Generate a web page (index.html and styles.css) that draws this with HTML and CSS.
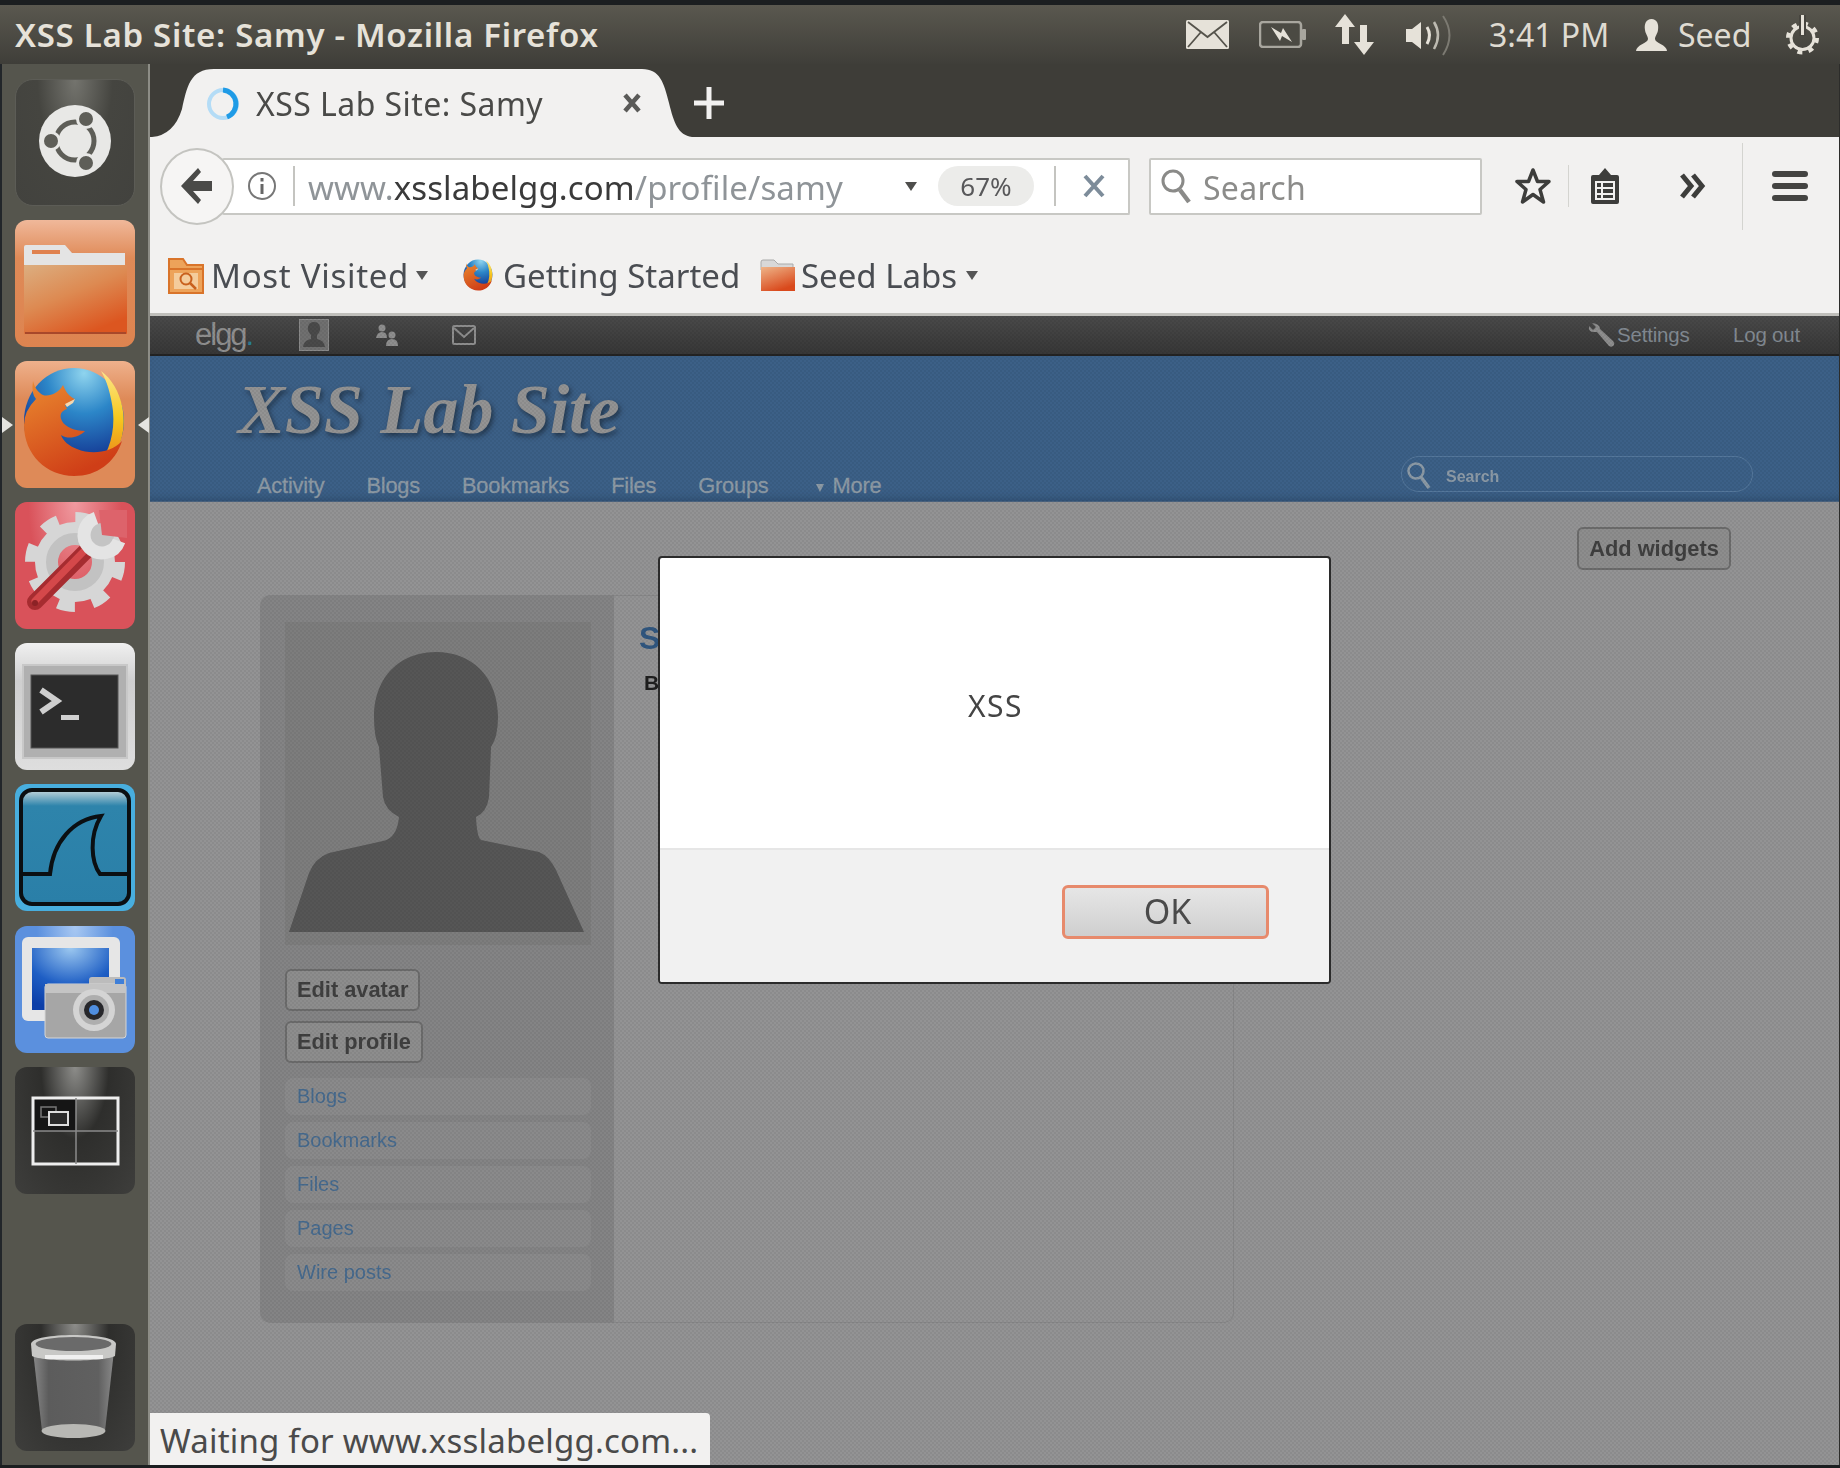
FILE: index.html
```html
<!DOCTYPE html>
<html lang="en">
<head>
  <meta charset="UTF-8">
  <title>XSS Lab Site: Samy - Mozilla Firefox</title>
  <link rel="stylesheet" href="styles.css">
</head>
<body>

  <svg class="defs" width="0" height="0">
    <defs>
      <radialGradient id="ffBlue" cx="0.6" cy="0.05" r="0.95">
        <stop offset="0" stop-color="#8fd4ee"/>
        <stop offset="0.4" stop-color="#2c86c8"/>
        <stop offset="0.8" stop-color="#17429a"/>
        <stop offset="1" stop-color="#14307c"/>
      </radialGradient>
      <linearGradient id="ffOrange" x1="0" y1="0" x2="0.5" y2="1">
        <stop offset="0" stop-color="#ea8a30"/>
        <stop offset="1" stop-color="#cf3e17"/>
      </linearGradient>
      <linearGradient id="ffFlame" x1="0" y1="0" x2="0" y2="1">
        <stop offset="0" stop-color="#fbe58a"/>
        <stop offset="0.5" stop-color="#f7c81e"/>
        <stop offset="1" stop-color="#e8801c"/>
      </linearGradient>
      <symbol id="firefox" viewBox="0 0 118 122">
        <ellipse cx="59" cy="60" rx="50" ry="53" fill="url(#ffBlue)"/>
        <path d="M86 10C108 26 114 62 104 84C100 94 92 100 84 104C94 90 100 72 98 50C96 34 92 20 86 10Z" fill="url(#ffFlame)"/>
        <path d="M18 20Q16 32 21 38Q9 50 9 64C9 94 32 115 59 115C82 115 100 102 107 80C96 92 76 94 62 88C54 85 48 80 46 74C54 79 64 76 70 70C60 70 50 66 47 60C44 54 46 50 52 48L50 44L60 38C55 36 51 32 48 24C44 32 34 36 28 34C24 32 20 28 18 20Z" fill="url(#ffOrange)"/>
        <path d="M50 43L60 38L58 42L52 46Z" fill="#f6d8b0"/>
      </symbol>
    </defs>
  </svg>

  <div class="screen">

    <header class="panel">
      <div class="panel-title">XSS Lab Site: Samy - Mozilla Firefox</div>
      <div class="tray">
        <svg class="tray-mail" width="43" height="29" viewBox="0 0 43 29"><rect x="0" y="0" width="43" height="29" rx="1.5" fill="#e6e2d9"/><path d="M2 2L21.5 17L41 2M2 27L15 12M41 27L28 12" fill="none" stroke="#55534b" stroke-width="1.8"/></svg>
        <svg class="tray-battery" width="48" height="27" viewBox="0 0 48 27"><rect x="1" y="1" width="41" height="25" rx="3" fill="#4b4a43" stroke="#a8a69e" stroke-width="2.500"/><rect x="43" y="8" width="4" height="11" rx="1" fill="#a8a69e"/><path d="M12 6L22 12L24 7L33 21L23 15L21 20Z" fill="#e6e2d9"/></svg>
        <svg class="tray-net" width="41" height="41" viewBox="0 0 41 41"><path d="M11 0L21 13H15V30H8V13H1Z" fill="#e6e2d9"/><path d="M30 41L20 28H26V11H33V28H40Z" fill="#e6e2d9"/></svg>
        <svg class="tray-sound" width="46" height="42" viewBox="0 0 46 42"><path d="M0 15H6L15 8V35L6 28H0Z" fill="#e6e2d9"/><path d="M21 13Q26 21 21 30" fill="none" stroke="#e6e2d9" stroke-width="3"/><path d="M28 8Q36 21 28 35" fill="none" stroke="#bdbab1" stroke-width="2.5"/><path d="M37 2Q50 21 37 41" fill="none" stroke="#7c7a72" stroke-width="2"/></svg>
        <span class="tray-time">3:41 PM</span>
        <svg class="tray-user" width="31" height="32" viewBox="0 0 31 32"><path d="M15.5 0C21 0 23 5 22 11C21.500 15 19 17 19 20C19 24 31 26 31 32H0C0 26 12 24 12 20C12 17 9.500 15 9 11C8 5 10 0 15.5 0Z" fill="#e6e2d9"/></svg>
        <span class="tray-name">Seed</span>
        <svg class="tray-power" width="37" height="40" viewBox="0 0 37 40"><circle cx="18.500" cy="23" r="11.500" fill="none" stroke="#e6e2d9" stroke-width="3"/><circle cx="18.500" cy="23" r="14.500" fill="none" stroke="#e6e2d9" stroke-width="4" stroke-dasharray="5 6.390"/><rect x="15" y="0" width="7" height="21" fill="#47453f"/><rect x="17" y="0" width="3" height="20" fill="#e6e2d9"/></svg>
      </div>
    </header>

    <div class="desktop">

      <nav class="dock">
        <div class="launcher launcher-dash">
          <svg viewBox="0 0 120 127" width="120" height="127">
            <circle cx="60" cy="62" r="36" fill="#e8e8e6"/>
            <circle cx="60" cy="62" r="19" fill="none" stroke="#5e5e58" stroke-width="5"/>
            <circle cx="71" cy="40" r="8.500" fill="#5e5e58" stroke="#e8e8e6" stroke-width="3"/>
            <circle cx="71" cy="84" r="8.500" fill="#5e5e58" stroke="#e8e8e6" stroke-width="3"/>
            <circle cx="36" cy="62" r="8.500" fill="#5e5e58" stroke="#e8e8e6" stroke-width="3"/>
          </svg>
        </div>
        <div class="launcher launcher-files">
          <svg viewBox="0 0 120 127" width="120" height="127">
            <defs><linearGradient id="folderBody" x1="0" y1="0" x2="0.6" y2="1"><stop offset="0" stop-color="#dcae80"/><stop offset="0.5" stop-color="#dd8a52"/><stop offset="1" stop-color="#dc5620"/></linearGradient></defs>
            <path d="M9 27Q9 25 11 25H50L57 33H110V45H9Z" fill="#e4e4e4"/>
            <rect x="17" y="30" width="28" height="4" fill="#e0824f"/>
            <rect x="9" y="45" width="103" height="69" rx="1" fill="url(#folderBody)"/>
            <rect x="10" y="112" width="101" height="2" fill="#a8482a"/>
          </svg>
        </div>
        <div class="launcher launcher-firefox">
          <svg width="120" height="127"><use href="#firefox" width="118" height="122"/></svg>
        </div>
        <div class="launcher launcher-tools">
          <svg viewBox="0 0 120 127" width="120" height="127">
            <circle cx="60" cy="60" r="44" fill="none" stroke="#d6d6d6" stroke-width="12" stroke-dasharray="17 17.560"/>
            <circle cx="60" cy="60" r="33" fill="none" stroke="#d6d6d6" stroke-width="14"/>
            <circle cx="60" cy="60" r="23" fill="none" stroke="#c2c2c2" stroke-width="12"/>
            <path d="M20 100L74 46" stroke="#a62c30" stroke-width="16" stroke-linecap="round"/>
            <path d="M20 99L72 46" stroke="#d4484a" stroke-width="7" stroke-linecap="round"/>
            <circle cx="20" cy="101" r="3" fill="#8c2226"/>
            <circle cx="87" cy="33" r="12" fill="#c4c4c4"/>
            <path d="M87 33L84 8L112 8L112 36Z" fill="#dd636b"/>
            <path d="M81 16A18 18 0 1 0 104 39" fill="none" stroke="#e4e4e4" stroke-width="13"/>
          </svg>
        </div>
        <div class="launcher launcher-terminal">
          <svg viewBox="0 0 120 127" width="120" height="127">
            <rect x="8" y="22" width="104" height="93" fill="#b0b0b0" stroke="#c8c8c8" stroke-width="2"/>
            <rect x="16" y="32" width="87" height="73" fill="#2c2c2c" stroke="#555" stroke-width="1"/>
            <path d="M26 47L42 58L26 69" fill="none" stroke="#cfcfcf" stroke-width="6"/>
            <rect x="46" y="72" width="18" height="5" fill="#d0d0d0"/>
          </svg>
        </div>
        <div class="launcher launcher-shark">
          <svg viewBox="0 0 120 127" width="120" height="127">
            <defs><linearGradient id="sharkGlow" x1="0" y1="0" x2="0" y2="1"><stop offset="0" stop-color="#c4d6dc"/><stop offset="0.14" stop-color="#2e84ab"/><stop offset="1" stop-color="#2a7fa8"/></linearGradient></defs>
            <rect x="6" y="6" width="108" height="114" rx="11" fill="url(#sharkGlow)" stroke="#0b0f12" stroke-width="4"/>
            <path d="M6 90H35C38 58 58 35 86 32C74 52 76 78 85 90H114" fill="none" stroke="#0b0f12" stroke-width="4"/>
          </svg>
        </div>
        <div class="launcher launcher-shot">
          <svg viewBox="0 0 120 127" width="120" height="127">
            <defs><radialGradient id="shotScreen" cx="0.5" cy="0" r="1"><stop offset="0" stop-color="#9cc8f0"/><stop offset="0.6" stop-color="#1e5ec4"/><stop offset="1" stop-color="#0c3ea8"/></radialGradient></defs>
            <rect x="7" y="11" width="98" height="84" rx="6" fill="#e6e6e6"/>
            <rect x="17" y="22" width="77" height="62" fill="url(#shotScreen)"/>
            <rect x="74" y="51" width="37" height="10" rx="3" fill="#bcbcbc"/>
            <rect x="30" y="58" width="81" height="54" rx="3" fill="#a6a6a6" stroke="#d6d6d6" stroke-width="1"/>
            <rect x="30" y="58" width="81" height="9" fill="#c4c4c4"/>
            <rect x="100" y="53" width="9" height="5" fill="#3f7fd8"/>
            <circle cx="79" cy="84" r="21" fill="#d4d4d4"/>
            <circle cx="79" cy="84" r="15" fill="#aeaeae"/>
            <circle cx="79" cy="84" r="10" fill="#27272b"/>
            <circle cx="79" cy="84" r="5" fill="#4f8ee0"/>
          </svg>
        </div>
        <div class="launcher launcher-workspace">
          <svg viewBox="0 0 120 127" width="120" height="127">
            <rect x="18" y="31" width="43" height="33" fill="#151515"/>
            <rect x="18" y="31" width="85" height="66" fill="none" stroke="#eee" stroke-width="3"/>
            <path d="M61 31V97M18 64H103" stroke="#8a8a8a" stroke-width="1.500"/>
            <rect x="26" y="40" width="15" height="10" fill="none" stroke="#777" stroke-width="1.500"/>
            <rect x="34" y="45" width="19" height="13" fill="#2a2a2a" stroke="#ddd" stroke-width="2"/>
          </svg>
        </div>
        <div class="launcher launcher-trash">
          <svg viewBox="0 0 120 127" width="120" height="127">
            <defs><linearGradient id="cupGlass" x1="0" y1="0" x2="1" y2="0"><stop offset="0" stop-color="#8a8a8a"/><stop offset="0.2" stop-color="#5c5c5c"/><stop offset="0.8" stop-color="#606060"/><stop offset="1" stop-color="#8c8c8c"/></linearGradient></defs>
            <path d="M17 18L27 107H90L100 18Z" fill="url(#cupGlass)"/>
            <ellipse cx="58.500" cy="107" rx="32" ry="7" fill="#b8b8b4"/>
            <path d="M16 20C16 8 101 8 101 20L100 32C90 38 27 38 17 32Z" fill="#c8c8c6"/>
            <ellipse cx="58.500" cy="20" rx="38" ry="7" fill="#6a6a6a"/>
            <path d="M30 33H88" stroke="#f0f0f0" stroke-width="4"/>
          </svg>
        </div>
      </nav>

      <div class="browser">

        <div class="tabbar">
          <div class="tab">
            <svg class="tab-shape" width="540" height="68" viewBox="0 0 540 68"><path d="M0 68Q22 66 30 40C35 18 38 0 62 0H490C508 0 512 14 517 34C522 54 526 66 540 68Z" fill="#f2f1f0"/></svg>
            <svg class="tab-spinner" width="36" height="38" viewBox="0 0 36 38"><circle cx="18" cy="19" r="14" fill="none" stroke="#b4dcf6" stroke-width="4"/><path d="M18 5A14 14 0 0 1 22 32" fill="none" stroke="#1f9be6" stroke-width="5"/></svg>
            <span class="tab-label">XSS Lab Site: Samy</span>
            <svg class="tab-close" width="18" height="20" viewBox="0 0 18 20"><path d="M2 2L16 18M16 2L2 18" stroke="#5a5a58" stroke-width="4.500"/></svg>
          </div>
          <svg class="tab-new" width="30" height="32" viewBox="0 0 30 32"><path d="M15 0V32M0 16H30" stroke="#f2f1f0" stroke-width="5"/></svg>
        </div>

        <div class="navbar">
          <div class="back-btn">
            <svg width="34" height="38" viewBox="0 0 34 38"><path d="M19 1L2 19L19 37L22 33L14 24H33V14H14L22 5Z" fill="#4a4a48"/></svg>
          </div>
          <div class="urlbar">
            <svg class="url-info" width="30" height="30" viewBox="0 0 30 30"><circle cx="15" cy="15" r="13" fill="none" stroke="#777" stroke-width="2"/><rect x="13.500" y="13" width="3" height="10" fill="#666"/><rect x="13.500" y="7" width="3" height="3.500" fill="#666"/></svg>
            <span class="url-sep"></span>
            <span class="url-text">www.<b>xsslabelgg.com</b>/profile/samy</span>
            <span class="url-arrow"></span>
            <span class="url-zoom">67%</span>
            <span class="url-sep url-sep-right"></span>
            <svg class="url-stop" width="22" height="24" viewBox="0 0 22 24"><path d="M2 2L20 22M20 2L2 22" stroke="#7d8c9a" stroke-width="4"/></svg>
          </div>
          <div class="searchbar">
            <svg width="32" height="36" viewBox="0 0 32 36"><circle cx="13" cy="13" r="10" fill="none" stroke="#8a8a88" stroke-width="3"/><path d="M20 22L29 34" stroke="#8a8a88" stroke-width="4.500"/></svg>
            <span>Search</span>
          </div>
          <svg class="nav-star" width="36" height="38" viewBox="0 0 36 38"><path d="M18 3L22.500 14.500H34L25 22.500L28.500 35L18 27.500L7.500 35L11 22.500L2 14.500H13.500Z" fill="none" stroke="#3d3d3b" stroke-width="3.500" stroke-linejoin="round"/></svg>
          <span class="nav-sep nav-sep-short"></span>
          <svg class="nav-clip" width="28" height="36" viewBox="0 0 28 36"><path d="M14 0L20 7H26Q28 7 28 9V34Q28 36 26 36H2Q0 36 0 34V9Q0 7 2 7H8Z" fill="#3d3d3b"/><path d="M5 14H23V31H5ZM5 20H23M5 26H23M11 14V31" fill="none" stroke="#f2f1f0" stroke-width="2"/></svg>
          <svg class="nav-more" width="28" height="28" viewBox="0 0 28 28"><path d="M3 3L12 14L3 25M14 3L23 14L14 25" fill="none" stroke="#3d3d3b" stroke-width="5"/></svg>
          <span class="nav-sep nav-sep-tall"></span>
          <div class="hamburger"><i></i><i></i><i></i></div>
        </div>

        <div class="bookmarks">
          <div class="bm bm-visited">
            <svg width="36" height="38" viewBox="0 0 36 38"><path d="M1 37V3H15L19 9H35V37Z" fill="#eda35a" stroke="#d9742a" stroke-width="2"/><path d="M1 13H35" stroke="#d9742a" stroke-width="2"/><rect x="6" y="17" width="24" height="16" fill="#f4cc9c"/><circle cx="18" cy="23" r="5.500" fill="none" stroke="#c9611e" stroke-width="2"/><path d="M22 27L28 33" stroke="#c9611e" stroke-width="2.500"/></svg>
            <span>Most Visited</span>
            <i class="caret"></i>
          </div>
          <div class="bm bm-started">
            <svg width="34" height="36"><use href="#firefox" width="34" height="36"/></svg>
            <span>Getting Started</span>
          </div>
          <div class="bm bm-labs">
            <svg width="36" height="34" viewBox="0 0 36 34"><defs><linearGradient id="bmFolder" x1="0" y1="0" x2="0.5" y2="1"><stop offset="0" stop-color="#eeb488"/><stop offset="1" stop-color="#d9491c"/></linearGradient></defs><path d="M1 4Q1 2 3 2H14L18 6H33V12H1Z" fill="#d8d8d8" stroke="#aaa" stroke-width="1"/><rect x="1" y="9" width="34" height="24" fill="url(#bmFolder)"/></svg>
            <span>Seed Labs</span>
            <i class="caret"></i>
          </div>
        </div>

        <main class="webpage">
          <div class="elgg-topbar">
            <span class="elgg-logo">elgg<em>.</em></span>
            <svg class="top-avatar" width="30" height="32" viewBox="0 0 30 32"><rect width="30" height="32" fill="#707070" stroke="#8a8a8a" stroke-width="2"/><path d="M4 28Q5 21 12 20V16Q8 12 9 8Q10 3 15 3Q20 3 21 8Q22 12 18 16V20Q25 21 26 28Z" fill="#4a4a4a"/></svg>
            <svg class="top-friends" width="24" height="22" viewBox="0 0 24 22"><circle cx="7" cy="4" r="3.500" fill="#8e8e8e"/><path d="M1 14Q2 8 7 8Q12 8 12 14Z" fill="#8e8e8e"/><circle cx="17" cy="11" r="3.500" fill="#8e8e8e"/><path d="M11 22Q11 15 17 15Q23 15 23 22Z" fill="#8e8e8e"/></svg>
            <svg class="top-mail" width="24" height="20" viewBox="0 0 24 20"><rect x="1" y="1" width="22" height="18" rx="1.500" fill="none" stroke="#8e8e8e" stroke-width="2"/><path d="M2 3L12 12L22 3" fill="none" stroke="#8e8e8e" stroke-width="2"/></svg>
            <svg class="top-wrench" width="27" height="26" viewBox="0 0 27 26"><path d="M4 1L8 5L5 8L1 4Q0 10 6 10L9 10L21 24Q24 26 26 23Q27 21 25 19L12 7Q12 2 4 1Z" fill="#8e8e8e"/></svg>
            <a class="top-link top-settings">Settings</a>
            <a class="top-link top-logout">Log out</a>
          </div>

          <div class="elgg-header">
            <h1 class="site-title">XSS Lab Site</h1>
            <div class="site-bottom">
              <ul class="site-menu">
                <li>Activity</li>
                <li>Blogs</li>
                <li>Bookmarks</li>
                <li>Files</li>
                <li>Groups</li>
                <li class="menu-more"><i></i>More</li>
              </ul>
              <div class="site-search">
                <svg width="26" height="30" viewBox="0 0 26 30"><circle cx="10" cy="10" r="7.500" fill="none" stroke="#8c9aa6" stroke-width="2.500"/><path d="M15 16L23 27" stroke="#8c9aa6" stroke-width="3.500"/></svg>
                <span>Search</span>
              </div>
            </div>
          </div>

          <div class="elgg-content">
            <div class="widget-bar"><button class="elgg-btn btn-widgets">Add widgets</button></div>
            <div class="profile-card">
              <aside class="owner-block">
                <div class="avatar">
                  <svg width="306" height="323" viewBox="0 0 306 323"><path d="M4 310L24 251Q30 236 44 231L98 219Q112 216 114 195Q100 188 98 175L94 125Q89 115 89 95C89 55 115 30 151 30C187 30 213 55 213 95Q213 115 206 125L204 175Q202 190 191 195Q192 216 196 218L254 230Q264 234 271 248L299 310Z" fill="#565656"/></svg>
                </div>
                <div class="owner-actions">
                  <button class="elgg-btn">Edit avatar</button>
                  <button class="elgg-btn">Edit profile</button>
                </div>
                <ul class="owner-menu">
                  <li>Blogs</li>
                  <li>Bookmarks</li>
                  <li>Files</li>
                  <li>Pages</li>
                  <li>Wire posts</li>
                </ul>
              </aside>
              <section class="profile-details">
                <h2 class="profile-name">S</h2>
                <div class="profile-field">B</div>
              </section>
            </div>
          </div>

          <div class="dither"></div>

          <div class="alert-dialog">
            <div class="alert-body">XSS</div>
            <div class="alert-footer"><button class="alert-ok">OK</button></div>
          </div>

          <div class="statusbar">Waiting for www.xsslabelgg.com...</div>
        </main>

      </div>
    </div>
  </div>

</body>
</html>
```

FILE: styles.css
```css
* {
  box-sizing: border-box;
}

html, body {
  margin: 0;
  height: 100%;
}

body {
  background: #1b1e20;
  font-family: 'Noto Sans', sans-serif;
  overflow: hidden;
}

.defs {
  position: absolute;
}

.screen {
  height: 1468px;
  padding: 5px 0 3px;
  display: flex;
  flex-direction: column;
  filter: blur(0.6px);
}

/* top panel */

.panel {
  height: 59px;
  flex: none;
  display: flex;
  align-items: center;
  justify-content: space-between;
  padding-left: 15px;
  background: linear-gradient(to bottom, #5a584f, #3f3e39);
  color: #e6e2d9;
}

.panel-title {
  font-size: 33px;
  font-weight: 600;
  letter-spacing: 0.7px;
  white-space: nowrap;
}

.tray {
  display: flex;
  align-items: center;
  padding-right: 19px;
}

.tray-battery { margin-left: 30px; }
.tray-net { margin-left: 27px; }
.tray-sound { margin-left: 31px; }
.tray-user { margin-left: 28px; }
.tray-power { margin-left: 32px; }

.tray-time, .tray-name {
  font-size: 32px;
  color: #dfdbd2;
}

.tray-time {
  margin-left: 37px;
  width: 119px;
  white-space: nowrap;
}

.tray-name {
  margin-left: 11px;
  width: 74px;
}

.desktop {
  flex: 1;
  min-height: 0;
  display: flex;
}

/* launcher */

.dock {
  width: 150px;
  flex: none;
  display: flex;
  flex-direction: column;
  gap: 14.1px;
  padding: 15px 0 14px 13px;
  background: #55554d;
  border-left: 2px solid #22262a;
  border-right: 2px solid #8d8d86;
}

.launcher {
  width: 120px;
  height: 127px;
  flex: none;
  border-radius: 12px;
  position: relative;
}

.launcher svg {
  display: block;
}

.launcher-dash {
  background: radial-gradient(ellipse at 50% 0, #74746e, #454540 45%, #42423e);
  border: 1px solid #5c5c56;
  border-radius: 18px;
}

.launcher-dash svg { margin: -1px; }

.launcher-files {
  background: linear-gradient(to bottom, #f0b89a, #df8a57 30%, #dd8450);
}

.launcher-firefox {
  background: linear-gradient(to bottom, #efb18c, #de8a58 30%);
}

.launcher-firefox::before, .launcher-firefox::after {
  content: "";
  position: absolute;
  top: 50%;
  margin-top: -8px;
  border: 8px solid transparent;
}

.launcher-firefox::before {
  left: -13px;
  border-width: 8px 0 8px 11px;
  border-left-color: #e4e4e0;
}

.launcher-firefox::after {
  right: -14px;
  border-width: 8px 11px 8px 0;
  border-right-color: #e4e4e0;
}

.launcher-tools {
  background: radial-gradient(ellipse at 50% 0, #f09aa0, #d9525a 55%);
}

.launcher-terminal {
  background: linear-gradient(to bottom, #f0f0f0, #cfcfcf 30%, #dedede);
}

.launcher-shark {
  background: #48aede;
}

.launcher-shot {
  background: radial-gradient(ellipse at 50% 0, #a8c8f2, #5b90de 45%);
}

.launcher-workspace, .launcher-trash {
  background: radial-gradient(ellipse at 50% 0, #8d8d8a, #2e2e2c 40%, #3e3e3c);
}

.launcher-trash {
  margin-top: auto;
}

/* browser chrome */

.browser {
  flex: 1;
  min-width: 0;
  display: flex;
  flex-direction: column;
  border-right: 1px solid #2c2c2a;
}

.tabbar {
  height: 73px;
  flex: none;
  display: flex;
  align-items: flex-end;
  background: #3e3d38;
  padding-left: 2px;
}

.tab {
  position: relative;
  width: 540px;
  height: 68px;
  flex: none;
  display: flex;
  align-items: center;
  color: #4a4a48;
}

.tab-shape {
  position: absolute;
  left: 0;
  top: 0;
}

.tab-spinner, .tab-label, .tab-close {
  position: relative;
  flex: none;
}

.tab-spinner { margin-left: 53px; margin-top: 2px; }

.tab-label {
  margin-left: 15px;
  font-size: 32px;
  width: 288px;
  letter-spacing: 0.45px;
  white-space: nowrap;
}

.tab-close { margin-left: 79px; }

.tab-new {
  margin: 0 0 18px 2px;
}

.navbar {
  height: 98px;
  flex: none;
  display: flex;
  align-items: center;
  padding-left: 10px;
  background: #f2f1f0;
}

.back-btn {
  width: 74px;
  height: 77px;
  flex: none;
  border: 2px solid #c4c4c0;
  border-radius: 50%;
  background: #f6f5f4;
  display: flex;
  align-items: center;
  justify-content: center;
  margin-right: -12px;
  position: relative;
  z-index: 1;
  padding-right: 2px;
}

.urlbar, .searchbar {
  height: 57px;
  display: flex;
  align-items: center;
  background: #fff;
  border: 2px solid #c8c8c4;
  border-radius: 2px;
}

.urlbar {
  width: 908px;
  padding-left: 25px;
  border-left: none;
  flex: none;
}

.url-sep {
  width: 2px;
  height: 40px;
  background: #c4c4c0;
  margin-left: 16px;
}

.url-text {
  margin: 2px 0 0 13px;
  width: 534px;
  font-size: 33px;
  color: #8f9498;
  white-space: nowrap;
  letter-spacing: 0.1px;
}

.url-text b {
  font-weight: 400;
  color: #3a3a3a;
}

.url-arrow {
  margin-left: 63px;
  border-style: solid;
  border-width: 9px 6px 0;
  border-color: #4e4e4c transparent transparent;
}

.url-zoom {
  width: 96px;
  height: 40px;
  margin-left: 21px;
  border-radius: 20px;
  background: #ececea;
  color: #58585a;
  font-size: 26px;
  line-height: 40px;
  text-align: center;
}

.url-sep-right {
  margin-left: 20px;
}

.url-stop {
  margin-left: 27px;
}

.searchbar {
  width: 333px;
  margin-left: 19px;
  padding-left: 9px;
  flex: none;
  color: #8c8c8a;
  font-size: 32px;
}

.searchbar span {
  margin: 2px 0 0 11px;
  letter-spacing: 0.3px;
}

.nav-star { margin-left: 33px; flex: none; }

.nav-sep {
  width: 1px;
  background: #d4d4d0;
  flex: none;
}

.nav-sep-short { height: 42px; margin-left: 17px; }
.nav-sep-tall { height: 87px; margin-left: 35px; }
.nav-clip { margin-left: 22px; flex: none; }
.nav-more { margin-left: 60px; flex: none; }

.hamburger {
  width: 36px;
  margin-left: 29px;
  flex: none;
  display: flex;
  flex-direction: column;
  gap: 6px;
}

.hamburger i {
  height: 6px;
  border-radius: 3px;
  background: #444442;
}

.bookmarks {
  height: 81px;
  flex: none;
  display: flex;
  align-items: center;
  padding: 2px 0 0 18px;
  background: #f2f1f0;
  border-bottom: 3px solid #c0bfbb;
  color: #4a4d52;
  font-size: 33px;
}

.bm {
  display: flex;
  align-items: center;
}

.bm span {
  white-space: nowrap;
}

.bm-visited svg { margin-right: 7px; }
.bm-visited span { width: 194px; letter-spacing: 0.7px; }
.bm-started { margin-left: 33px; }
.bm-started svg { margin-right: 8px; }
.bm-started span { width: 235px; }
.bm-labs { margin-left: 22px; }
.bm-labs svg { margin-right: 5px; }
.bm-labs span { width: 154px; }

.caret {
  margin-left: 11px;
  border-style: solid;
  border-width: 9px 6px 0;
  border-color: #555 transparent transparent;
}

/* page under the alert */

.webpage {
  flex: 1;
  min-height: 0;
  position: relative;
  overflow: hidden;
  background: #939394;
  font-family: 'Liberation Sans', sans-serif;
}

.elgg-topbar {
  height: 40px;
  display: flex;
  align-items: center;
  background: linear-gradient(to bottom, #4a4a4a, #373737);
  border-bottom: 2px solid #232323;
  color: #8e8e8e;
}

.elgg-logo {
  margin-left: 45px;
  width: 59px;
  font-size: 31px;
  line-height: 30px;
  letter-spacing: -2px;
  color: #8f8f8f;
}

.elgg-logo em {
  color: #2b7f93;
  font-style: normal;
}

.top-avatar { margin-left: 45px; }
.top-friends { margin-left: 46px; }
.top-mail { margin-left: 53px; }
.top-wrench { margin-left: auto; }

.top-link {
  font-size: 20.500px;
  letter-spacing: -0.2px;
  color: #828a92;
}

.top-settings { margin-left: 2px; width: 116px; }
.top-logout { width: 106px; }

.elgg-header {
  height: 146px;
  display: flex;
  flex-direction: column;
  background: #3c6087;
  border-bottom: 1px solid #4b6480;
  box-shadow: inset 0 -8px 8px -6px #2e4e70;
}

.site-title {
  margin: 13px 0 0 88px;
  height: 81px;
  font-family: 'Liberation Serif', serif;
  font-size: 70.500px;
  font-style: italic;
  font-weight: 700;
  letter-spacing: -0.2px;
  color: #939393;
  text-shadow: 2px 3px 5px #24384e;
  white-space: nowrap;
}

.site-bottom {
  display: flex;
  justify-content: space-between;
  padding-right: 86px;
}

.site-menu {
  list-style: none;
  margin: 23px 0 0 107px;
  padding: 0;
  display: flex;
  gap: 42px;
  font-size: 21.800px;
  color: #8d9aa5;
  -webkit-text-stroke: 0.3px #8d9aa5;
  letter-spacing: -0.2px;
}

.menu-more i {
  display: inline-block;
  margin: 0 9px 1px 5px;
  border-style: solid;
  border-width: 8px 4px 0;
  border-color: #8d9aa5 transparent transparent;
}

.site-search {
  width: 352px;
  height: 36px;
  margin-top: 6px;
  display: flex;
  align-items: center;
  padding: 0 0 0 4px;
  border: 1px solid #55789c;
  border-radius: 18px;
  font-size: 16px;
  font-weight: 700;
  color: #8c9aa6;
}

.site-search svg { margin-top: 4px; }
.site-search span { margin-left: 14px; margin-top: 5px; }

.elgg-content {
  padding-top: 25px;
}

.widget-bar {
  display: flex;
  justify-content: flex-end;
  padding-right: 108px;
}

.elgg-btn {
  height: 42px;
  padding: 0 10px;
  border: 2px solid #6c6c6c;
  border-radius: 6px;
  background: #8d8d8d;
  font-family: 'Liberation Sans', sans-serif;
  font-size: 21.800px;
  font-weight: 700;
  color: #3f3f3f;
  white-space: nowrap;
}

.btn-widgets {
  width: 154px;
  height: 43px;
  padding: 0;
}

.profile-card {
  width: 974px;
  height: 728px;
  margin: 25px 0 0 110px;
  display: flex;
  border-radius: 8px;
}

.owner-block {
  width: 354px;
  flex: none;
  padding: 27px 23px 0 25px;
  background: #848485;
  border-radius: 10px 0 0 10px;
}

.avatar {
  height: 323px;
  background: #7d7d7d;
}

.avatar svg {
  display: block;
}

.owner-actions {
  margin-top: 24px;
  display: flex;
  flex-direction: column;
  align-items: flex-start;
  gap: 10px;
}

.owner-menu {
  list-style: none;
  margin: 15px 0 0;
  padding: 0;
  display: flex;
  flex-direction: column;
  gap: 7px;
  font-size: 20px;
  color: #466a8e;
}

.owner-menu li {
  height: 37px;
  line-height: 37px;
  padding-left: 12px;
  border-radius: 8px;
  background: #8a8a8b;
}

.profile-details {
  flex: 1;
  padding: 24px 0 0 25px;
  border: 1px solid #878788;
  border-left: none;
  border-radius: 0 10px 10px 0;
}

.profile-name {
  margin: 0;
  font-size: 32px;
  color: #30567f;
}

.profile-field {
  margin: 14px 0 0 5px;
  font-size: 21px;
  font-weight: 700;
  color: #1f1f1f;
}

.dither {
  position: absolute;
  inset: 0;
  background: repeating-conic-gradient(transparent 0 25%, rgba(0, 0, 0, 0.05) 0 50%) 0 0 / 4px 4px;
  pointer-events: none;
}

.alert-dialog {
  position: absolute;
  left: 508px;
  top: 240px;
  width: 673px;
  height: 428px;
  display: flex;
  flex-direction: column;
  border: 2px solid #2b2b2b;
  border-radius: 4px;
  overflow: hidden;
  background: #fff;
  font-family: 'Noto Sans', sans-serif;
}

.alert-body {
  height: 290px;
  flex: none;
  padding: 128px 0 0 2px;
  text-align: center;
  font-size: 30px;
  line-height: 40px;
  letter-spacing: 1.5px;
  color: #444;
}

.alert-footer {
  flex: 1;
  display: flex;
  justify-content: flex-end;
  padding: 35px 60px 0 0;
  background: #f1f1f1;
  border-top: 2px solid #e6e6e6;
}

.alert-ok {
  width: 207px;
  height: 54px;
  border: 3px solid #e78a6c;
  border-radius: 6px;
  background: linear-gradient(to bottom, #e6e6e6, #cfcfcf);
  font-family: inherit;
  font-size: 34px;
  line-height: 44px;
  color: #4a4a4a;
  padding: 0 0 2px 4px;
}

.statusbar {
  position: absolute;
  left: 0;
  bottom: 0;
  width: 560px;
  height: 52px;
  padding-left: 10px;
  background: #f2f1f0;
  border-top-right-radius: 4px;
  font-family: 'Noto Sans', sans-serif;
  font-size: 33px;
  line-height: 55px;
  color: #4a4a4a;
  white-space: nowrap;
  letter-spacing: 0.2px;
}
```
